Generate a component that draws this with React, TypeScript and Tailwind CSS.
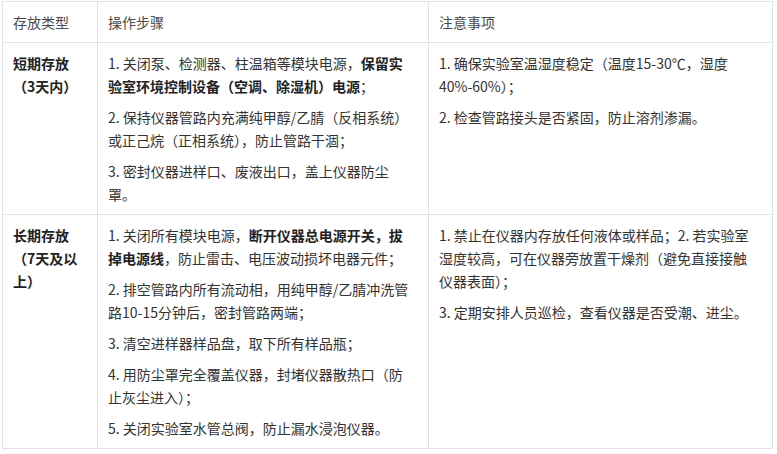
const B = ({ children }: { children: React.ReactNode }) => (
  <b className="font-bold text-[#222]">{children}</b>
);

const rows = [
  {
    type: ["短期存放", "（3天内）"],
    steps: [
      [<>1. 关闭泵、检测器、柱温箱等模块电源，<B>保留实</B></>, <><B>验室环境控制设备（空调、除湿机）电源</B>；</>],
      [<>2. 保持仪器管路内充满纯甲醇/乙腈（反相系统）</>, <>或正己烷（正相系统），防止管路干涸；</>],
      [<>3. 密封仪器进样口、废液出口，盖上仪器防尘</>, <>罩。</>],
    ],
    notes: [
      [<>1. 确保实验室温湿度稳定（温度15-30℃，湿度</>, <>40%-60%）；</>],
      [<>2. 检查管路接头是否紧固，防止溶剂渗漏。</>],
    ],
  },
  {
    type: ["长期存放", "（7天及以", "上）"],
    steps: [
      [<>1. 关闭所有模块电源，<B>断开仪器总电源开关，拔</B></>, <><B>掉电源线</B>，防止雷击、电压波动损坏电器元件；</>],
      [<>2. 排空管路内所有流动相，用纯甲醇/乙腈冲洗管</>, <>路10-15分钟后，密封管路两端；</>],
      [<>3. 清空进样器样品盘，取下所有样品瓶；</>],
      [<>4. 用防尘罩完全覆盖仪器，封堵仪器散热口（防</>, <>止灰尘进入）；</>],
      [<>5. 关闭实验室水管总阀，防止漏水浸泡仪器。</>],
    ],
    notes: [
      [
        <>1. 禁止在仪器内存放任何液体或样品；2. 若实验室</>,
        <>湿度较高，可在仪器旁放置干燥剂（避免直接接触</>,
        <>仪器表面）；</>,
      ],
      [<>3. 定期安排人员巡检，查看仪器是否受潮、进尘。</>],
    ],
  },
];

function Paras({ items }: { items: React.ReactNode[][] }) {
  return (
    <div className="flex flex-col gap-2">
      {items.map((lines, i) => (
        <p key={i} className="whitespace-nowrap">
          {lines.map((l, j) => (
            <span key={j} className="block">
              {l}
            </span>
          ))}
        </p>
      ))}
    </div>
  );
}

const cell = "border border-[#e3e3e3] px-[10px] pt-[9px] pb-[8px]";

export default function App() {
  return (
    <div className="bg-white w-[777px] h-[454px] pt-[1px] pl-[2px] font-['Microsoft_YaHei','Noto_Sans_CJK_SC',sans-serif] text-[14px] leading-[23px] text-[#333]">
      <table className="w-[771px] table-fixed border-collapse">
        <colgroup>
          <col className="w-[95px]" />
          <col className="w-[331px]" />
          <col />
        </colgroup>
        <thead>
          <tr className="text-[#4a4a4a] text-left">
            <th className={`${cell} font-normal`}>存放类型</th>
            <th className={`${cell} font-normal`}>操作步骤</th>
            <th className={`${cell} font-normal`}>注意事项</th>
          </tr>
        </thead>
        <tbody>
          {rows.map((r, i) => (
            <tr key={i} className="align-top">
              <td className={`${cell} font-bold text-[#222] whitespace-nowrap`}>
                {r.type.map((t, j) => (
                  <div key={j}>{t}</div>
                ))}
              </td>
              <td className={cell}>
                <Paras items={r.steps} />
              </td>
              <td className={cell}>
                <Paras items={r.notes} />
              </td>
            </tr>
          ))}
        </tbody>
      </table>
    </div>
  );
}
